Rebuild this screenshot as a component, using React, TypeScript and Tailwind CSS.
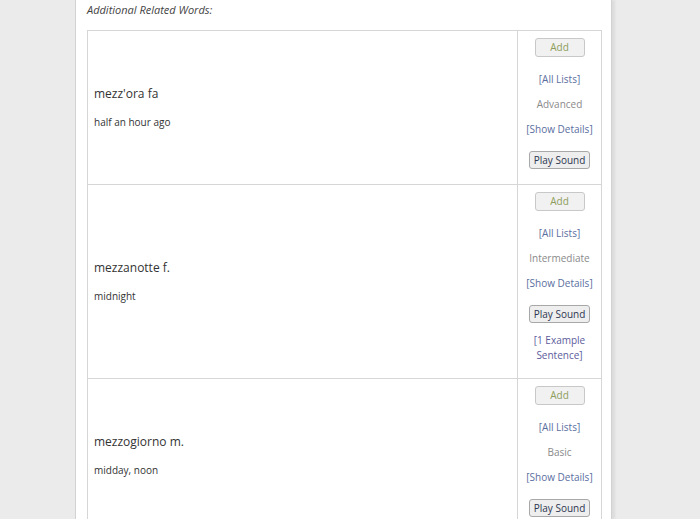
import type { ReactNode } from 'react'

type RelatedWord = {
    word: string
    meaning: string
    level: string
    examples?: number
}

const words: RelatedWord[] = [
    { word: "mezz'ora fa", meaning: 'half an hour ago', level: 'Advanced' },
    { word: 'mezzanotte f.', meaning: 'midnight', level: 'Intermediate', examples: 1 },
    { word: 'mezzogiorno m.', meaning: 'midday, noon', level: 'Basic' },
]

function LinkText({ children, className = '' }: { children: ReactNode; className?: string }) {
    return <a className={`cursor-pointer text-[#5a6ea0] ${className}`}>{children}</a>
}

function WordRow({ item }: { item: RelatedWord }) {
    return (
        <div className="flex border-b border-[#d6d6d6]">
            <div className="flex w-[430px] flex-col justify-center border-r border-[#d6d6d6] px-[6px]">
                <p className="text-[12px] leading-[17px] text-[#333]">{item.word}</p>
                <p className="mt-[13px] text-[10px] leading-[15px] text-[#333]">{item.meaning}</p>
            </div>
            <div className="flex flex-1 flex-col items-center pb-[15px] pt-[7px] text-center text-[10px] leading-[15px]">
                <button className="h-[19px] w-[50px] rounded-[3px] border border-[#c8c8c8] bg-[#f1f1f1] text-[10px] text-[#8e9d5c]">
                    Add
                </button>
                <LinkText className="mt-[15px]">[All Lists]</LinkText>
                <span className="mt-[10px] text-[#8a8a8a]">{item.level}</span>
                <LinkText className="mt-[10px]">[Show Details]</LinkText>
                <button className="mt-[14px] h-[18px] rounded-[3px] border border-[#a8a8a8] bg-[#eeeeee] px-[4px] text-[10px] leading-[15px] text-[#2d3550]">
                    Play Sound
                </button>
                {item.examples ? (
                    <a className="mt-[10px] cursor-pointer text-[#5c5c9c]">
                        [{item.examples} Example
                        <br />
                        Sentence]
                    </a>
                ) : null}
            </div>
        </div>
    )
}

export default function App() {
    return (
        <div
            className="flex h-[519px] w-[700px] overflow-hidden bg-[#ebebeb]"
            style={{ fontFamily: '"Open Sans", "Liberation Sans", sans-serif' }}
        >
            <main className="ml-[75px] w-[537px] border-l border-r border-[#d2d2d2] bg-white pl-[11px] pr-[9px] shadow-[3px_0_2px_#dcdcdc]">
                <p className="pt-[2px] text-[11px] italic leading-[15px] text-[#444]">
                    Additional Related Words:
                </p>
                <div className="mt-[13px] border-l border-r border-t border-[#d6d6d6]">
                    {words.map((item) => (
                        <WordRow key={item.word} item={item} />
                    ))}
                </div>
            </main>
        </div>
    )
}
